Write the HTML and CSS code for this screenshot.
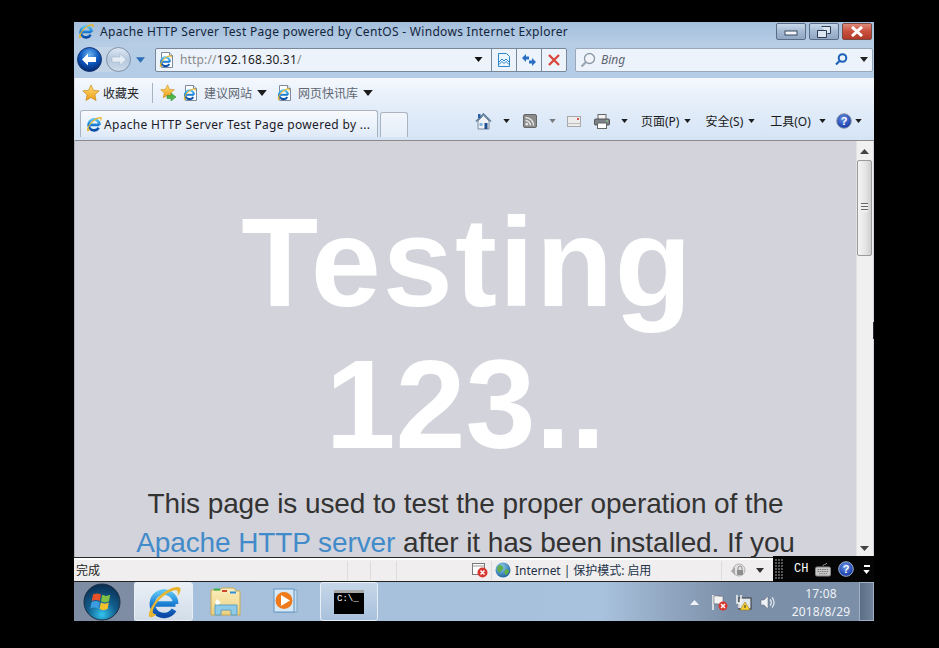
FILE: index.html
```html
<!DOCTYPE html>
<html lang="zh">
<head>
<meta charset="utf-8">
<title>Apache HTTP Server Test Page powered by CentOS</title>
<link rel="stylesheet" href="styles.css">
</head>
<body>
<svg class="defs" width="0" height="0">
  <defs>
    <linearGradient id="ieBlue" x1="0" y1="0" x2="0" y2="1"><stop offset="0" stop-color="#5cc3f2"/><stop offset=".5" stop-color="#1a7fd4"/><stop offset="1" stop-color="#0b4aa5"/></linearGradient>
    <radialGradient id="orbBack" cx="50%" cy="30%" r="75%"><stop offset="0" stop-color="#6fb6f0"/><stop offset=".5" stop-color="#0d58c0"/><stop offset="1" stop-color="#04205f"/></radialGradient>
    <linearGradient id="orbFwd" x1="0" y1="0" x2="0" y2="1"><stop offset="0" stop-color="#dfe8f3"/><stop offset=".5" stop-color="#b5c8de"/><stop offset="1" stop-color="#cfdcea"/></linearGradient>
    <radialGradient id="startOrb" cx="50%" cy="85%" r="85%"><stop offset="0" stop-color="#31c4ee"/><stop offset=".45" stop-color="#12608f"/><stop offset="1" stop-color="#0a2c4f"/></radialGradient>
    <radialGradient id="helpOrb" cx="45%" cy="35%" r="70%"><stop offset="0" stop-color="#6b93e6"/><stop offset="1" stop-color="#0a2ea0"/></radialGradient>
    <radialGradient id="globe" cx="40%" cy="30%" r="75%"><stop offset="0" stop-color="#8fd0ee"/><stop offset="1" stop-color="#1b5f9c"/></radialGradient>
    <linearGradient id="star" x1="0" y1="0" x2="0" y2="1"><stop offset="0" stop-color="#ffe27a"/><stop offset="1" stop-color="#ee9a12"/></linearGradient>
    <linearGradient id="folder" x1="0" y1="0" x2="0" y2="1"><stop offset="0" stop-color="#fbefbd"/><stop offset="1" stop-color="#eccf7e"/></linearGradient>
    <symbol id="ie" viewBox="0 0 16 16">
      <path d="M13.400 8.900H3.400M12.700 11.700A5.500 5.500 0 1 1 13.500 8.900" fill="none" stroke="url(#ieBlue)" stroke-width="2.600"/>
      <path d="M1.200 15C-.2 13 4.300 5.600 8.800 2.900c3.200-1.900 6.300-2.600 6.900-1.200.4.900-.3 2.300-1.300 3.500.2-1.500.2-2.300-.4-2.600-1.100-.5-3.400.6-5.600 2.100-3.400 2.300-6 6.500-5.700 8.400.1.600.8.700 1.900.4-1 1-2.500 2-3.200 1.500z" fill="#e8b52e"/>
    </symbol>
    <symbol id="iedoc" viewBox="0 0 16 16">
      <path d="M2.500.5h8l3 3v12h-11z" fill="#fff" stroke="#7d8a9a"/>
      <path d="M10.500.5v3h3" fill="#dfe6ee" stroke="#7d8a9a"/>
      <use href="#ie" x="0" y="2.500" width="13" height="13"/>
    </symbol>
    <symbol id="favstar" viewBox="0 0 18 18">
      <path d="M9 1l2.400 5.300 5.800.6-4.300 3.900 1.200 5.700L9 13.600l-5.100 2.900 1.200-5.700L.8 6.900l5.800-.6z" fill="url(#star)" stroke="#c98a18" stroke-width=".7"/>
    </symbol>
    <symbol id="drop" viewBox="0 0 8 5"><path d="M0 0h8L4 5z" fill="currentColor"/></symbol>
  </defs>
</svg>
<div class="window">
  <header class="titlebar">
    <svg class="ico16"><use href="#ie"/></svg>
    <span class="title-text">Apache HTTP Server Test Page powered by CentOS - Windows Internet Explorer</span>
    <div class="winctl">
      <div class="wbtn wmin"><svg width="14" height="8" viewBox="0 0 14 8"><rect x="1" y="3" width="12" height="4" fill="#f4f7fb" stroke="#3a4a60"/></svg></div>
      <div class="wbtn wres"><svg width="14" height="12" viewBox="0 0 14 12"><path d="M4.500.5h9v7h-3M.5 4.500h9v7h-9z" fill="#dce6f2" stroke="#2e3d52"/></svg></div>
      <div class="wbtn wclose"><svg width="14" height="11" viewBox="0 0 14 11"><path d="M2 1l10 9M12 1L2 10" stroke="#fff" stroke-width="3"/></svg></div>
    </div>
  </header>

  <nav class="navbar">
    <div class="navorbs">
      <div class="orb-pill">
        <svg width="25" height="25" viewBox="0 0 25 25"><circle cx="12.500" cy="12.500" r="12" fill="url(#orbBack)" stroke="#163a78"/><path d="M5 12.500l6-6v3.500h8v5h-8v3.500z" fill="#fff"/></svg>
        <svg width="25" height="25" viewBox="0 0 25 25"><circle cx="12.500" cy="12.500" r="12" fill="url(#orbFwd)" stroke="#7f90a6"/><path d="M20 12.500l-6-6v3.500H6v5h8v3.500z" fill="#e6edf5" stroke="#a9b8ca" stroke-width=".6"/></svg>
      </div>
      <svg class="orb-drop" width="9" height="6"><use href="#drop"/></svg>
    </div>
    <div class="addr">
      <svg class="ico16 addr-ico"><use href="#iedoc"/></svg>
      <span class="url"><span class="url-dim">http://</span>192.168.30.31<span class="url-dim">/</span></span>
      <svg class="addr-drop" width="9" height="5"><use href="#drop"/></svg>
      <div class="addr-cell"><svg width="16" height="16" viewBox="0 0 16 16"><path d="M2.500 1.500h8l3 3v10h-11z" fill="#eaf5fd" stroke="#2a86c8"/><path d="M3 10l3-3 2 2 2-2 3 3M3 12.500l3-3 2 2 2-2 3 3" fill="none" stroke="#2a86c8"/></svg></div>
      <div class="addr-cell"><svg width="16" height="16" viewBox="0 0 16 16"><path d="M1 6l4-4v2.500h3v3H5V10zM15 10l-4 4v-2.500H8v-3h3V6z" fill="#2a6fc0"/></svg></div>
      <div class="addr-cell"><svg width="14" height="14" viewBox="0 0 14 14"><path d="M2 2l10 10M12 2L2 12" stroke="#d9483e" stroke-width="2.400"/></svg></div>
    </div>
    <div class="search">
      <svg class="search-lens" width="16" height="16" viewBox="0 0 16 16"><circle cx="9.500" cy="6.500" r="5" fill="#f2f6fb" stroke="#8b97a6" stroke-width="1.300"/><path d="M6 10l-4.500 4.500" stroke="#9aa5b2" stroke-width="2.200"/></svg>
      <span class="search-text">Bing</span>
      <svg class="search-go" width="13" height="13" viewBox="0 0 13 13"><circle cx="7.500" cy="5" r="3.800" fill="none" stroke="#1c62b8" stroke-width="2"/><path d="M4.500 8L1 11.500" stroke="#1c62b8" stroke-width="2.200"/></svg>
      <svg class="search-drop" width="8" height="5"><use href="#drop"/></svg>
    </div>
  </nav>

  <div class="chrome">
    <div class="favbar">
      <svg class="fav-star" width="18" height="18"><use href="#favstar"/></svg>
      <span class="fav-label">收藏夹</span>
      <span class="fav-sep"></span>
      <svg class="fav-add" width="18" height="18" viewBox="0 0 18 18"><use href="#favstar" width="15" height="15"/><path d="M7 11.500h4V9l5 4-5 4v-2.500H7z" fill="#4eb54a" stroke="#2d8a2d" stroke-width=".5"/></svg>
      <svg class="ico16 fav-doc"><use href="#iedoc"/></svg>
      <span class="fav-link">建议网站</span>
      <svg class="fav-drop" width="10" height="6"><use href="#drop"/></svg>
      <svg class="ico16 fav-doc2"><use href="#iedoc"/></svg>
      <span class="fav-link">网页快讯库</span>
      <svg class="fav-drop" width="10" height="6"><use href="#drop"/></svg>
    </div>
    <div class="tabrow">
      <div class="tab">
        <svg class="ico16"><use href="#ie"/></svg>
        <span class="tab-text">Apache HTTP Server Test Page powered by ...</span>
      </div>
      <div class="newtab"></div>
      <div class="cmdbar">
        <svg class="cmd-home" width="17" height="17" viewBox="0 0 17 17"><path d="M1 8.500L8.500 1l7.500 7.500" fill="none" stroke="#5f7f9f" stroke-width="1.600"/><path d="M3 8l5.500-5.500L14 8v8H3z" fill="#eef2f6" stroke="#7d8a9a"/><rect x="9.500" y="10" width="3" height="6" fill="#1d4f8f"/><rect x="4.500" y="10" width="3" height="3" fill="#7fb2dc"/><rect x="3" y="1" width="2.500" height="4" fill="#2a5fa8"/></svg>
        <svg class="cmd-d1" width="7" height="4"><use href="#drop"/></svg>
        <svg class="cmd-rss" width="14" height="14" viewBox="0 0 14 14"><rect x=".5" y=".5" width="13" height="13" rx="1.500" fill="#8b8b8b" stroke="#666"/><circle cx="3.800" cy="10.200" r="1.400" fill="#e6e6e6"/><path d="M2.500 6.500a5 5 0 0 1 5 5M2.500 3.500a8 8 0 0 1 8 8" fill="none" stroke="#e6e6e6" stroke-width="1.500"/></svg>
        <svg class="cmd-d2" width="7" height="4"><use href="#drop"/></svg>
        <svg class="cmd-mail" width="14" height="11" viewBox="0 0 14 11"><rect x=".5" y=".5" width="13" height="10" fill="#ececec" stroke="#a8a8a8"/><path d="M.5 7.500h13" stroke="#bcbcbc"/><rect x="10" y="2" width="2" height="2" fill="#d94f4f"/></svg>
        <svg class="cmd-print" width="16" height="15" viewBox="0 0 16 15"><rect x="4" y=".5" width="8" height="5" fill="#f2f2f2" stroke="#666"/><rect x=".5" y="5" width="15" height="6" rx="1" fill="#7c8288" stroke="#555"/><rect x="3.500" y="9" width="9" height="5.500" fill="#fff" stroke="#666"/><rect x="12" y="6.500" width="2" height="1" fill="#8ce28c"/></svg>
        <svg class="cmd-d3" width="7" height="4"><use href="#drop"/></svg>
        <span class="cmd-label cmd-page">页面(P)</span>
        <svg class="cmd-d4" width="7" height="4"><use href="#drop"/></svg>
        <span class="cmd-label cmd-safe">安全(S)</span>
        <svg class="cmd-d4" width="7" height="4"><use href="#drop"/></svg>
        <span class="cmd-label cmd-tools">工具(O)</span>
        <svg class="cmd-d5" width="7" height="4"><use href="#drop"/></svg>
        <svg class="cmd-help" width="16" height="16" viewBox="0 0 16 16"><circle cx="8" cy="8" r="7.300" fill="url(#helpOrb)" stroke="#8c9aad"/><text class="q-mark" x="8" y="12" text-anchor="middle">?</text></svg>
        <svg class="cmd-d6" width="7" height="4"><use href="#drop"/></svg>
      </div>
    </div>
  </div>

  <main class="viewport">
    <div class="page">
      <h1 class="hero"><span class="hero-word">Testing</span> 123..</h1>
      <p class="lead">This page is used to test the proper operation of the <a class="lead-link" href="#">Apache HTTP server</a> after it has been installed. If you</p>
    </div>
    <div class="scrollbar">
      <svg class="sb-up" width="9" height="5" viewBox="0 0 9 5"><path d="M0 5h9L4.500 0z" fill="#444"/></svg>
      <div class="sb-thumb"><div class="sb-grip"></div></div>
      <svg class="sb-down" width="9" height="5" viewBox="0 0 9 5"><path d="M0 0h9L4.500 5z" fill="#444"/></svg>
    </div>
  </main>

  <footer class="status">
    <span class="st-done">完成</span>
    <span class="st-cell st-c1"></span>
    <span class="st-cell st-c2"></span>
    <span class="st-cell st-c3"></span>
    <svg class="st-err" width="16" height="15" viewBox="0 0 16 15"><rect x=".5" y=".5" width="12" height="11" fill="#fff" stroke="#777"/><path d="M.5 3h12" stroke="#999"/><circle cx="10.500" cy="9.500" r="5" fill="#d8372f"/><path d="M8.500 7.500l4 4M12.500 7.500l-4 4" stroke="#fff" stroke-width="1.500"/></svg>
    <span class="st-cell st-c4"></span>
    <svg class="st-globe" width="16" height="16" viewBox="0 0 16 16"><circle cx="8" cy="8" r="7.500" fill="url(#globe)"/><path d="M3 4c2-1 4-1 5 1s-1 3-2 4-2 2-3 0-1-3 0-5zM10 8c2-1 4 0 4 1s-2 4-3 4-2-4-1-5z" fill="#5fae46"/></svg>
    <span class="st-zone">Internet | 保护模式: 启用</span>
    <span class="st-cell st-c5"></span>
    <svg class="st-zoom" width="17" height="15" viewBox="0 0 17 15"><circle cx="9" cy="7" r="6" fill="#e3e3e3" stroke="#b0b0b0"/><path d="M1 8l4-4v8z" fill="#a8a8a8"/><rect x="7" y="7" width="6" height="5" fill="#8e8e8e"/><path d="M8 7V5a2 2 0 0 1 4 0v2" fill="none" stroke="#8e8e8e"/></svg>
    <svg class="st-drop" width="8" height="5"><use href="#drop"/></svg>
  </footer>

  <div class="taskbar">
    <div class="start">
      <svg width="38" height="38" viewBox="0 0 38 38">
        <circle cx="19" cy="19" r="18" fill="url(#startOrb)" stroke="#1c2f44"/>
        <path d="M10 11.500c3-1.500 5-1.500 8 0l-1.200 6.500c-3-1.500-5-1.500-8 0z" fill="#e8502a"/>
        <path d="M19.200 11.800c3 1.500 5 1.500 8 0L26 18.300c-3 1.500-5 1.500-8 0z" fill="#7fc241"/>
        <path d="M8.500 19.200c3-1.500 5-1.500 8 0l-1.200 6.500c-3-1.500-5-1.500-8 0z" fill="#3d9be0"/>
        <path d="M17.800 19.500c3 1.500 5 1.500 8 0l-1.200 6.500c-3 1.500-5 1.500-8 0z" fill="#f5c02c"/>
      </svg>
    </div>
    <div class="tb-btn tb-active"><svg width="36" height="34"><use href="#ie"/></svg></div>
    <div class="tb-app tb-folder">
      <svg width="32" height="31" viewBox="0 0 32 31"><path d="M1 4h9l2-2h12l2 3h4v24H1z" fill="url(#folder)" stroke="#c9a855"/><rect x="4" y="2.500" width="6" height="2" fill="#3bb34a"/><rect x="12" y="4" width="5" height="2" fill="#d2452f"/><rect x="20" y="5.500" width="6" height="2" fill="#2f8fdc"/><path d="M5 29V19h22v10h-6v-5H11v5z" fill="#8fcbe8" stroke="#5aa0c8"/><path d="M7 13l4 4-4 2-2-3z" fill="#fff"/></svg>
    </div>
    <div class="tb-app tb-wmp">
      <svg width="30" height="27" viewBox="0 0 30 27"><rect x="6" y="2" width="20" height="22" fill="#c4dbee" stroke="#7fa6c8"/><rect x="3" y="1" width="20" height="23" fill="#d8e8f5" stroke="#5f96c4"/><circle cx="13" cy="12.500" r="8.500" fill="#ee7a1b"/><path d="M10 7l9 5.500-9 5.500z" fill="#fff"/></svg>
    </div>
    <div class="tb-btn tb-cmd">
      <div class="cmd-icon"><span class="cmd-prompt">C:\_</span></div>
    </div>
    <div class="tray">
      <svg class="tray-up" width="9" height="5" viewBox="0 0 9 5"><path d="M0 5h9L4.500 0z" fill="#f0f4f8"/></svg>
      <svg class="tray-flag" width="17" height="17" viewBox="0 0 17 17"><path d="M2 1v15" stroke="#f4f4f4" stroke-width="1.500"/><path d="M3 2c3-1 5 1 9 0v8c-4 1-6-1-9 0z" fill="#f4f4f4" stroke="#555" stroke-width=".5"/><circle cx="12" cy="12" r="4.500" fill="#d8372f"/><path d="M10 10l4 4M14 10l-4 4" stroke="#fff" stroke-width="1.400"/></svg>
      <svg class="tray-net" width="16" height="17" viewBox="0 0 16 17"><rect x="3" y="4" width="12" height="11" fill="#dfe6ec" stroke="#333"/><path d="M1 1v8h4V1M3 9v5" fill="none" stroke="#f4f4f4" stroke-width="1.500"/><path d="M9 8l5 8H4z" fill="#f5d030" stroke="#8a6a10" stroke-width=".5"/><rect x="8.500" y="11" width="1" height="3" fill="#333"/></svg>
      <svg class="tray-vol" width="16" height="15" viewBox="0 0 16 15"><path d="M1 5h3l4-4v13l-4-4H1z" fill="#eef2f6" stroke="#667" stroke-width=".5"/><path d="M10 4.500a4 4 0 0 1 0 6M12 2.500a7 7 0 0 1 0 10" fill="none" stroke="#e8eef4" stroke-width="1.200"/></svg>
      <div class="clock"><span>17:08</span><span>2018/8/29</span></div>
    </div>
    <div class="show-desktop"></div>
  </div>

  <div class="langbar">
    <span class="lang-grip"></span>
    <span class="lang-ch">CH</span>
    <svg class="lang-kb" width="16" height="16" viewBox="0 0 16 16"><path d="M8 5c0-2 3-1 4-3" fill="none" stroke="#999"/><rect x=".5" y="6" width="15" height="9" rx="1.500" fill="#c9c9c9" stroke="#888"/><path d="M2.500 8.500h11M2.500 10.500h11M4 12.700h8" stroke="#777" stroke-dasharray="1.500 .8"/></svg>
    <svg class="lang-help" width="16" height="16" viewBox="0 0 16 16"><circle cx="8" cy="8" r="7.300" fill="url(#helpOrb)" stroke="#9fb0c8"/><text class="q-mark" x="8" y="12" text-anchor="middle">?</text></svg>
    <div class="lang-opts"><span class="lang-dash"></span><svg width="7" height="4"><use href="#drop"/></svg></div>
  </div>
  <span class="edge-mark"></span>
</div>
</body>
</html>
```
FILE: styles.css
```css
* { box-sizing: border-box; }
html, body { margin: 0; height: 100%; }
body { background: #000; overflow: hidden; font-family: "Noto Sans", "Noto Sans CJK SC", sans-serif; font-size: 12px; color: #1c1c1c; }
.defs { position: absolute; }
svg { display: block; flex: none; }
.ico16 { width: 16px; height: 16px; }

.window { position: relative; width: 800px; height: 599px; margin: 22px 0 0 74px; display: flex; flex-direction: column; overflow: hidden; }

.titlebar { height: 22px; flex: none; display: flex; align-items: center; padding: 0 2px 4px 4px; background: linear-gradient(#a4bedb, #b6cde5); }
.title-text { margin-left: 6px; color: #12253c; letter-spacing: .3px; white-space: nowrap; }
.winctl { margin-left: auto; display: flex; gap: 3px; align-self: flex-start; margin-top: 1px; }
.wbtn { width: 30px; height: 17px; border: 1px solid #5c6e85; border-radius: 2px; display: flex; align-items: center; justify-content: center; background: linear-gradient(#c7d8ea, #a4b9d2 50%, #8fa7c4); }
.wclose { background: linear-gradient(#e0897a, #c9503d 50%, #b03a2a); border-color: #7a4a44; }

.navbar { height: 34px; flex: none; display: flex; align-items: center; padding: 0 1px 3px 3px; background: linear-gradient(#b6cde5, #b4cce6); }
.navorbs { display: flex; align-items: center; width: 78px; flex: none; color: #2a6fb8; }
.orb-pill { display: flex; gap: 4px; border-radius: 13px; background: #c3d4e7; }
.orb-drop { margin-left: 5px; }
.addr { width: 412px; height: 24px; flex: none; display: flex; align-items: center; background: #edf3fb; border: 1px solid #79879a; border-radius: 2px; color: #111; }
.addr-ico { margin-left: 3px; }
.url { margin-left: 5px; color: #1c1c1c; letter-spacing: .15px; }
.url-dim { color: #8a8a8a; }
.addr-drop { margin-left: auto; margin-right: 8px; }
.addr-cell { width: 25px; height: 22px; border-left: 1px solid #79879a; display: flex; align-items: center; justify-content: center; }
.search { width: 298px; height: 24px; flex: none; margin-left: 8px; display: flex; align-items: center; background: #edf3fb; border: 1px solid #9aa8ba; border-radius: 2px; color: #222; }
.search-lens { margin-left: 4px; }
.search-text { margin-left: 5px; font-style: italic; color: #5d6570; }
.search-go { margin-left: auto; }
.search-drop { margin: 0 4px 0 12px; }

.chrome { height: 63px; flex: none; display: flex; flex-direction: column; padding-bottom: 3px; background: linear-gradient(#f5f8fe, #e8f0fb 30%, #d5e4f5); border-bottom: 1px solid #8a8a8a; border-left: 1px solid #d8dde3; }
.favbar { height: 30px; flex: none; display: flex; align-items: center; padding-left: 7px; }
.fav-label { margin-left: 3px; color: #222; }
.fav-sep { width: 1px; height: 20px; background: #a9b4c2; margin-left: 13px; }
.fav-add { margin-left: 7px; }
.fav-doc { margin-left: 5px; }
.fav-doc2 { margin-left: 10px; }
.fav-link { margin-left: 5px; color: #5e6670; }
.fav-drop { margin-left: 5px; }
.tabrow { flex: 1; display: flex; align-items: flex-end; padding-left: 5px; }
.tab { width: 298px; height: 27px; display: flex; align-items: center; padding-left: 5px; background: linear-gradient(#f7fafe, #dfeaf7); border: 1px solid #aab4c0; border-bottom: 0; border-radius: 3px 3px 0 0; }
.tab-text { margin-left: 2px; color: #1a1a28; letter-spacing: .32px; white-space: nowrap; }
.newtab { width: 28px; height: 25px; margin-left: 2px; background: linear-gradient(#f2f6fc, #e4edf8); border: 1px solid #aab4c0; border-bottom: 0; border-radius: 3px 3px 0 0; }
.cmdbar { display: flex; align-items: center; height: 27px; margin-left: 67px; padding-bottom: 5px; }
.cmd-d1 { margin-left: 11px; }
.cmd-rss { margin-left: 13px; }
.cmd-d2 { margin-left: 12px; color: #7a7a7a; }
.cmd-mail { margin-left: 11px; }
.cmd-print { margin-left: 13px; }
.cmd-d3 { margin-left: 11px; }
.cmd-label { color: #1a1a1a; white-space: nowrap; }
.cmd-page { margin-left: 13px; }
.cmd-safe { margin-left: 14px; }
.cmd-tools { margin-left: 15px; }
.cmd-d4 { margin-left: 5px; }
.cmd-d5 { margin-left: 8px; }
.cmd-help { margin-left: 10px; }
.cmd-d6 { margin-left: 3px; }
.q-mark { font: bold 11px "Liberation Sans", sans-serif; fill: #fff; }

.viewport { height: 416px; flex: none; display: flex; border-left: 1px solid #aeb2ba; background: #d3d3db; overflow: hidden; }
.page { width: 781px; flex: none; text-align: center; padding: 0 45px; font-family: "Liberation Sans", Arial, sans-serif; }
.hero { margin: 51px 0 0; font-size: 126px; line-height: 142px; font-weight: 700; color: #fff; }
.hero-word { letter-spacing: 2px; margin-left: 4px; }
.lead { margin: 8px 0 0; font-size: 28px; line-height: 39px; color: #333; letter-spacing: -.1px; }
.lead-link { color: #428bca; text-decoration: none; }
.scrollbar { flex: 1; display: flex; flex-direction: column; align-items: center; background: #f0f0f0; margin-right: 1px; padding: 8px 1px 0 0; border-left: 1px solid #e2e2e6; }
.sb-thumb { width: 15px; height: 96px; margin-top: 6px; border: 1px solid #9a9a9a; border-radius: 2px; background: linear-gradient(90deg, #f4f4f4, #e6e6e6 55%, #cfcfcf); display: flex; align-items: center; justify-content: center; }
.sb-grip { width: 7px; height: 9px; background: repeating-linear-gradient(#666 0 1px, #f0f0f0 1px 3px); margin-top: -2px; }
.sb-down { margin-top: 290px; }

.status { height: 25px; flex: none; display: flex; align-items: center; padding: 1px 0 0 2px; background: #f0eeee; border-top: 1px solid #2a2a2a; box-shadow: inset 0 2px 0 #fff; border-bottom: 1px solid #222; color: #222; }
.st-done { width: 271px; flex: none; }
.st-cell { width: 1px; height: 19px; background: #dcdcdc; flex: none; }
.st-c2 { margin-left: 22px; }
.st-c3 { margin-left: 25px; }
.st-err { margin-left: 75px; }
.st-c4 { margin-left: 3px; }
.st-globe { margin-left: 3px; }
.st-zone { margin-left: 4px; color: #23344a; letter-spacing: -.05px; white-space: nowrap; }
.st-c5 { margin-left: 70px; }
.st-zoom { margin-left: 8px; }
.st-drop { margin-left: 9px; color: #333; }

.taskbar { flex: 1; min-height: 0; display: flex; align-items: stretch; background: linear-gradient(90deg, #a6c0dc 0%, #a8c1dc 66%, #7c8fa8 82%, #7c8fa8 100%); }
.start { width: 60px; flex: none; display: flex; align-items: center; justify-content: center; background: #7e8da3; padding-right: 5px; }
.tb-btn { flex: none; display: flex; align-items: center; justify-content: center; border: 1px solid #e8eef5; border-radius: 3px; }
.tb-active { width: 59px; background: linear-gradient(#e9eff6, #d2dde9); }
.tb-app { flex: none; display: flex; align-items: center; justify-content: center; }
.tb-folder { width: 66px; }
.tb-wmp { width: 54px; }
.tb-cmd { width: 58px; margin-left: 7px; background: linear-gradient(#c6d6e8, #a8c1dc); }
.cmd-icon { width: 30px; height: 24px; background: #000; border-top: 3px solid #a8a8a8; display: flex; align-items: flex-start; padding-left: 3px; }
.cmd-prompt { font: 9px/12px "Liberation Mono", monospace; color: #fff; }
.tray { margin-left: auto; display: flex; align-items: center; padding-top: 1px; }
.tray-up { margin-right: 12px; }
.tray-flag { margin-right: 8px; }
.tray-net { margin-right: 8px; }
.tray-vol { margin-right: 7px; }
.clock { width: 76px; display: flex; flex-direction: column; align-items: center; gap: 3px; color: #eef3f8; line-height: 15px; letter-spacing: .15px; }
.show-desktop { width: 15px; flex: none; background: linear-gradient(90deg, #5c6e85, #71849c); border: 1px solid #9fb0c4; }

.langbar { position: absolute; left: 699px; top: 534px; width: 101px; height: 26px; background: #050505; display: flex; align-items: center; color: #fff; }
.lang-grip { width: 8px; height: 20px; margin-left: 2px; background: radial-gradient(circle at 1px 1px, #555 1px, transparent 1px) 0 0 / 3px 3px; }
.lang-ch { margin-left: 11px; font: 12px "Liberation Mono", monospace; color: #fff; }
.lang-kb { margin-left: 7px; }
.lang-help { margin-left: 7px; }
.lang-opts { margin-left: 9px; display: flex; flex-direction: column; align-items: center; gap: 3px; }
.lang-dash { width: 6px; height: 2px; background: #fff; }
.edge-mark { position: absolute; left: 799px; top: 300px; width: 1px; height: 17px; background: #2a2a35; }
```
